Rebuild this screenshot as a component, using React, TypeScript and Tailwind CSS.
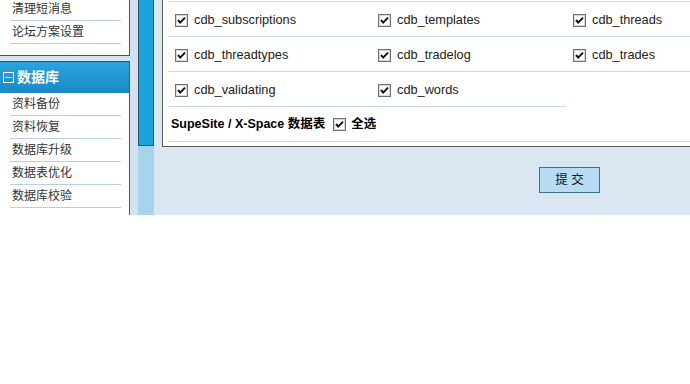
import React from "react";

const font = { fontFamily: '"Liberation Sans", "Noto Sans CJK SC", sans-serif' };

const CheckBox = () => (
  <svg width="13" height="13" viewBox="0 0 13 13" className="shrink-0">
    <rect x="0.5" y="0.5" width="12" height="12" fill="#ffffff" stroke="#6f6f6f" />
    <rect x="1.5" y="1.5" width="10" height="10" fill="none" stroke="#d8d8d8" />
    <polyline points="3,6 5.2,8.6 10,3.6" fill="none" stroke="#111" strokeWidth="2" />
  </svg>
);

const topItems = ["清理短消息", "论坛方案设置"];
const dbItems = ["资料备份", "资料恢复", "数据库升级", "数据表优化", "数据库校验"];

const rows = [
  ["cdb_subscriptions", "cdb_templates", "cdb_threads"],
  ["cdb_threadtypes", "cdb_tradelog", "cdb_trades"],
  ["cdb_validating", "cdb_words"],
];

const widths = ["w-[203px]", "w-[195px]", "w-[130px]"];

function SideItem({ label }: { label: string }) {
  return (
    <div className="h-[23px] pl-[10px] pr-[8px]">
      <div className="h-full border-b border-[#b7cfe0] flex items-center pl-[2px] text-[12px] text-[#333]">
        {label}
      </div>
    </div>
  );
}

export default function App() {
  return (
    <div className="w-[690px] h-[384px] bg-white overflow-hidden" style={font}>
      <div className="flex h-[215px]">
        {/* sidebar */}
        <div className="w-[130px] shrink-0 flex flex-col bg-[#d6e3f1]">
          <div className="bg-white border-r border-b border-[#555] h-[56px]">
            <div className="h-[21px] pl-[10px] pr-[8px]">
              <div className="h-full border-b border-[#b7cfe0] flex items-center pl-[2px] pb-[3px] text-[12px] text-[#333]">
                {topItems[0]}
              </div>
            </div>
            <SideItem label={topItems[1]} />
          </div>
          <div className="h-[5px]" />
          <div className="flex-1 bg-white border-r border-[#555] flex flex-col">
            <div className="h-[32px] border-t border-[#2f566c] bg-gradient-to-b from-[#2ba4de] to-[#1a8ac6] flex items-center pl-[3px] gap-[3px]">
              <svg width="11" height="11" viewBox="0 0 11 11">
                <rect x="0.5" y="0.5" width="10" height="10" fill="none" stroke="#fff" />
                <line x1="2.5" y1="5.5" x2="8.5" y2="5.5" stroke="#fff" />
              </svg>
              <span className="text-[14px] font-bold text-white">数据库</span>
            </div>
            {dbItems.map((d) => (
              <SideItem key={d} label={d} />
            ))}
          </div>
        </div>

        {/* strip + scroll bar */}
        <div className="w-[8px] shrink-0 bg-[#d4e2f0]" />
        <div className="w-[16px] shrink-0 flex flex-col">
          <div className="h-[146px] bg-[#1ca2dc] border-x border-b border-[#2f5468]" />
          <div className="flex-1 bg-[#a6d4eb]" />
        </div>

        {/* main */}
        <div className="flex-1 min-w-0 overflow-hidden bg-[#dbe6f3] pl-[8px]">
          <div className="bg-white border-l border-b border-[#5a5a5a] pl-[5px] h-[147px] w-[560px]">
            <div className="h-[2px] border-b border-[#c6dae6]" />
            {rows.map((r, i) => (
              <div key={i} className="flex">
                {r.map((c, j) => (
                  <div
                    key={c}
                    className={`${widths[j]} shrink-0 h-[35px] border-b border-[#c6dae6] flex items-center pt-[2px] pl-[7px] gap-[6px] text-[12.75px] text-[#222]`}
                  >
                    <CheckBox />
                    <span>{c}</span>
                  </div>
                ))}
              </div>
            ))}
            <div className="h-[35px] border-b border-[#c6dae6] flex items-center pl-[3px] text-[12.5px] font-bold text-black">
              <span>SupeSite / X-Space 数据表</span>
              <span className="ml-[8px] mr-[5px] flex">
                <CheckBox />
              </span>
              <span>全选</span>
            </div>
          </div>
          <div className="pt-[20px] pl-[377px]">
            <button className="w-[61px] h-[26px] border border-[#3d6f94] bg-[#b9dcf5] text-[12.5px] text-[#111] flex items-center justify-center">
              提 交
            </button>
          </div>
        </div>
      </div>
    </div>
  );
}
